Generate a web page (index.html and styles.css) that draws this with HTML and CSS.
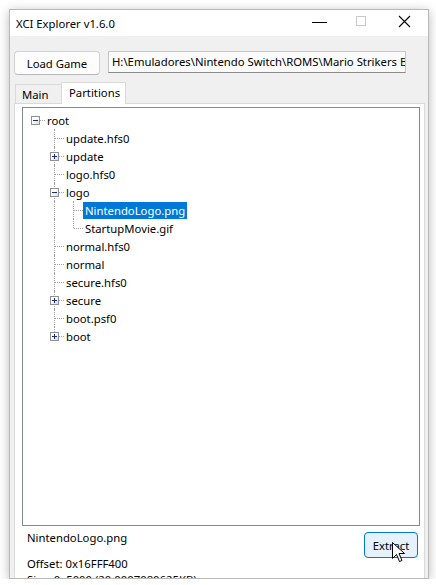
FILE: index.html
```html
<!DOCTYPE html>
<html>
<head>
  <title>XCI Explorer v1.6.0</title>
  <link rel="stylesheet" href="styles.css">
</head>
<body>
  <div class="window">
    <div class="titlebar">
      <span class="title">XCI Explorer v1.6.0</span>
      <div class="caption-buttons">
        <svg class="cap" width="46" height="26" viewBox="0 0 46 26"><line x1="22" y1="12.5" x2="37" y2="12.5" stroke="#000" stroke-width="1"/></svg>
        <svg class="cap" width="46" height="26" viewBox="0 0 46 26"><rect x="20.5" y="6.5" width="9" height="9" fill="none" stroke="#c8c8c8" stroke-width="1"/></svg>
        <svg class="cap" width="46" height="26" viewBox="0 0 46 26"><path d="M17 6 L28 17 M28 6 L17 17" stroke="#000" stroke-width="1.1"/></svg>
      </div>
    </div>

    <div class="client">
      <div class="top-row">
        <button class="btn">Load Game</button>
        <div class="path-box">H:\Emuladores\Nintendo Switch\ROMS\Mario Strikers Battle League Football [0100E1A0130E0000].xci</div>
      </div>

      <div class="tabs">
        <div class="tab">Main</div>
        <div class="tab active">Partitions</div>
      </div>

      <div class="tab-page">
        <div class="tree">
          <div class="row">
            <span class="cell conn root-conn"><span class="exp minus"></span></span>
            <span class="label">root</span>
          </div>
          <div class="row">
            <span class="cell"></span>
            <span class="cell conn mid"></span>
            <span class="label">update.hfs0</span>
          </div>
          <div class="row">
            <span class="cell"></span>
            <span class="cell conn mid"><span class="exp plus"></span></span>
            <span class="label">update</span>
          </div>
          <div class="row">
            <span class="cell"></span>
            <span class="cell conn mid"></span>
            <span class="label">logo.hfs0</span>
          </div>
          <div class="row">
            <span class="cell"></span>
            <span class="cell conn mid"><span class="exp minus"></span></span>
            <span class="label">logo</span>
          </div>
          <div class="row">
            <span class="cell"></span>
            <span class="cell pass"></span>
            <span class="cell conn mid"></span>
            <span class="label selected">NintendoLogo.png</span>
          </div>
          <div class="row">
            <span class="cell"></span>
            <span class="cell pass"></span>
            <span class="cell conn last"></span>
            <span class="label">StartupMovie.gif</span>
          </div>
          <div class="row">
            <span class="cell"></span>
            <span class="cell conn mid"></span>
            <span class="label">normal.hfs0</span>
          </div>
          <div class="row">
            <span class="cell"></span>
            <span class="cell conn mid"></span>
            <span class="label">normal</span>
          </div>
          <div class="row">
            <span class="cell"></span>
            <span class="cell conn mid"></span>
            <span class="label">secure.hfs0</span>
          </div>
          <div class="row">
            <span class="cell"></span>
            <span class="cell conn mid"><span class="exp plus"></span></span>
            <span class="label">secure</span>
          </div>
          <div class="row">
            <span class="cell"></span>
            <span class="cell conn mid"></span>
            <span class="label">boot.psf0</span>
          </div>
          <div class="row">
            <span class="cell"></span>
            <span class="cell conn last"><span class="exp plus"></span></span>
            <span class="label">boot</span>
          </div>
        </div>

        <div class="info">
          <div class="info-text">
            <div class="file-name">NintendoLogo.png</div>
            <div class="offset">Offset: 0x16FFF400</div>
            <div>Size: 0x5000 (20.0007080625KB)</div>
          </div>
          <button class="btn extract">Extract</button>
          <svg class="cursor" width="14" height="21" viewBox="0 0 14 21">
            <path d="M0.5 0.5 L0.5 16.5 L4.5 12.5 L7.5 19.5 L10 18.5 L7 11.5 L12.5 11.5 Z" fill="#fff" stroke="#000" stroke-width="1"/>
          </svg>
        </div>
      </div>
    </div>
  </div>
</body>
</html>
```

FILE: styles.css
```css
body {
  margin: 0;
  padding: 0;
  background-color: #fff;
  font-family: "Noto Sans", "Open Sans", sans-serif;
  font-size: 11.3px;
  color: #000;
}

.window {
  width: 420px;
  height: 570px;
  margin: 9px 0 0 9px;
  border: 1px solid #b9b9b9;
  box-sizing: border-box;
  box-shadow: 0 2px 10px rgba(0, 0, 0, 0.28);
  overflow: hidden;
  display: flex;
  flex-direction: column;
}

.titlebar {
  height: 26px;
  background-color: #fff;
  display: flex;
  align-items: center;
  justify-content: space-between;
  flex-shrink: 0;
}

.title {
  padding-left: 6px;
  padding-top: 1px;
}

.caption-buttons {
  display: flex;
  align-self: flex-start;
}

.cap {
  display: block;
}

.client {
  flex: 1;
  background-color: #f0f0f0;
  padding: 15px 0 0 4px;
  display: flex;
  flex-direction: column;
  min-height: 0;
}

.top-row {
  display: flex;
  align-items: flex-start;
  gap: 8px;
}

.btn {
  font-family: inherit;
  font-size: 11.3px;
  color: #000;
  background-color: #fdfdfd;
  border: 1px solid #d0d0d0;
  border-bottom-color: #b8b8b8;
  border-radius: 4px;
  height: 24px;
  width: 86px;
  padding: 0;
}

.path-box {
  width: 298px;
  height: 22px;
  box-sizing: border-box;
  background-color: #fbfbfb;
  border: 1px solid #c6c6c6;
  border-bottom-color: #8a8a8a;
  padding: 0 0 0 3px;
  line-height: 19px;
  white-space: nowrap;
  overflow: hidden;
}

.tabs {
  display: flex;
  align-items: flex-end;
  margin-top: 7px;
  padding-left: 1px;
  height: 21px;
  position: relative;
  z-index: 1;
}

.tab {
  height: 19px;
  box-sizing: border-box;
  border: 1px solid #d9d9d9;
  border-bottom: none;
  background-color: #f0f0f0;
  padding: 0 6px;
  line-height: 19px;
  width: 47px;
}

.tab.active {
  height: 22px;
  margin-bottom: -1px;
  width: 65px;
  margin-left: -1px;
  background-color: #fff;
  line-height: 20px;
  padding: 0 7px;
}

.tab-page {
  width: 411px;
  flex: 1;
  background-color: #fff;
  border: 1px solid #d9d9d9;
  box-sizing: border-box;
  padding: 3px 4px 0 7px;
  display: flex;
  flex-direction: column;
}

.tree {
  height: 419px;
  box-sizing: border-box;
  border: 1px solid #828790;
  background-color: #fff;
  padding: 3px 0 0 3px;
  flex-shrink: 0;
}

.row {
  display: flex;
  height: 18px;
  align-items: center;
}

.cell {
  width: 19px;
  height: 18px;
  position: relative;
  flex-shrink: 0;
}

.pass::before {
  content: "";
  position: absolute;
  left: 9px;
  top: 0;
  bottom: 0;
  border-left: 1px dotted #a0a0a0;
}

.conn::after {
  content: "";
  position: absolute;
  left: 10px;
  right: 0;
  top: 9px;
  border-top: 1px dotted #a0a0a0;
}

.mid::before,
.last::before {
  content: "";
  position: absolute;
  left: 9px;
  top: 0;
  border-left: 1px dotted #a0a0a0;
}

.mid::before {
  bottom: 0;
}

.last::before {
  height: 9px;
}

.exp {
  position: absolute;
  left: 5px;
  top: 5px;
  width: 9px;
  height: 9px;
  box-sizing: border-box;
  border: 1px solid #919191;
  background: linear-gradient(135deg, #fff 40%, #d8d8d8);
  z-index: 1;
}

.exp::before {
  content: "";
  position: absolute;
  left: 1px;
  top: 3px;
  width: 5px;
  height: 1px;
  background-color: #1a2a8a;
}

.plus::after {
  content: "";
  position: absolute;
  left: 3px;
  top: 1px;
  width: 1px;
  height: 5px;
  background-color: #1a2a8a;
}

.label {
  padding: 0 2px;
  height: 17px;
  line-height: 17px;
  white-space: nowrap;
}

.label.selected {
  background-color: #0078d7;
  color: #fff;
}

.info {
  display: flex;
  justify-content: space-between;
  align-items: flex-start;
  position: relative;
  padding: 4px 2px 0 5px;
}

.info-text {
  line-height: 16px;
}

.offset {
  margin-top: 10px;
}

.extract {
  width: 54px;
  height: 26px;
  margin-top: 2px;
  background-color: #e5f1fb;
  border: 1px solid #0078d7;
  border-radius: 4px;
}

.cursor {
  position: absolute;
  left: 370px;
  top: 16px;
}
```
